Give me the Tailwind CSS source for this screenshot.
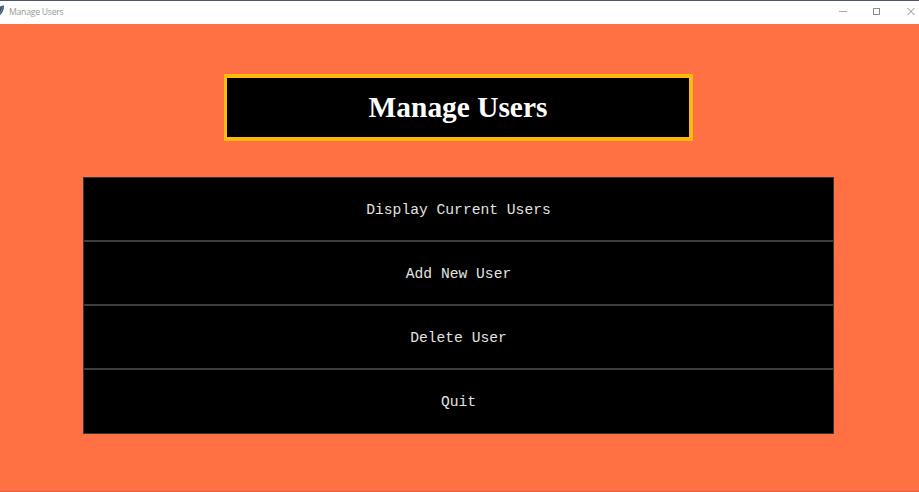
<!DOCTYPE html>
<html lang="en">
<head>
<meta charset="utf-8">
<title>Manage Users</title>
<script src="https://cdn.jsdelivr.net/npm/@tailwindcss/browser@4"></script>
</head>
<body class="w-[919px] h-[492px] overflow-hidden bg-[#ff7043] flex flex-col border-b border-[#d9663f]">
<header class="h-6 shrink-0 bg-white border-t border-[#4d566e] flex items-center justify-between">
  <div class="flex items-center h-full">
    <svg class="w-[9px] h-[23px]" viewBox="0 0 9 23"><path d="M0 5.5 L4 4.2 Q4.3 8 2.5 11 Q1.6 13 0 14.3Z" fill="#3f5878"/><path d="M0 13 L3 6" stroke="#8298ae" stroke-width=".6"/></svg>
    <span class="font-['Open_Sans',sans-serif] text-[8.7px] tracking-[-0.27px] leading-[23px] text-[#999]">Manage Users</span>
  </div>
  <svg class="w-[84px] h-[23px]" viewBox="0 0 84 23" fill="none" stroke="#8c8c8c"><path d="M4 10.5H12" stroke="#aaa"/><rect x="38.5" y="7.5" width="6" height="6"/><path d="M72.5 7L79.5 14M79.5 7L72.5 14"/></svg>
</header>
<main class="flex flex-col items-center pr-[2px] pt-[50px]">
  <h1 class="w-[469px] h-[67px] border-4 border-l-3 border-[#ffb90a] bg-black text-white flex items-center justify-center pt-px font-['Liberation_Serif',serif] font-bold text-[29.4px] leading-none">Manage Users</h1>
  <nav class="mt-9 w-[751px] h-[257px] bg-black border border-[#353535] flex flex-col font-['Liberation_Mono',monospace] text-[14.65px] text-[#e3e3e0]">
    <button class="h-16 shrink-0 pt-[3px] border-b-2 border-[#3c3c3c]">Display Current Users</button>
    <button class="h-16 shrink-0 pt-[3px] border-b-2 border-[#3c3c3c]">Add New User</button>
    <button class="h-16 shrink-0 pt-[3px] border-b-2 border-[#3c3c3c]">Delete User</button>
    <button class="h-[63px] shrink-0 pt-[2px]">Quit</button>
  </nav>
</main>
</body>
</html>
